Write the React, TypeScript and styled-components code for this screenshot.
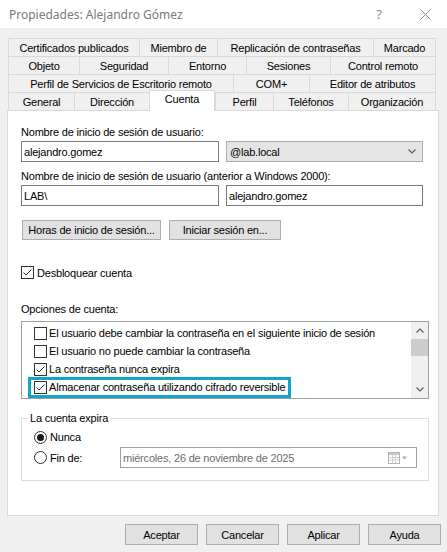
import React from "react";
import styled, { createGlobalStyle, css } from "styled-components";

const Global = createGlobalStyle`
  html, body { margin: 0; padding: 0; background: #f0f0f0; }
  body {
    font-family: "Liberation Sans", Arial, sans-serif;
    font-size: 11px;
    letter-spacing: -0.2px;
    color: #000;
  }
  * { box-sizing: border-box; }
`;

const Window = styled.div`
  width: 447px;
  height: 552px;
  display: flex;
  flex-direction: column;
  background: #f0f0f0;
  overflow: hidden;
`;

const TitleBar = styled.div`
  height: 28px;
  flex: none;
  display: flex;
  align-items: center;
  background: #fff;
  padding-left: 9px;
  font-family: "Noto Sans", "Open Sans", sans-serif;
  font-size: 12px;
  letter-spacing: 0;
  color: #7a7a7a;
`;

const TitleText = styled.div`
  flex: 1;
`;

const TitleButton = styled.div<{ $w: number }>`
  width: ${(p) => p.$w}px;
  height: 28px;
  display: flex;
  align-items: center;
  justify-content: center;
  color: #8a8a8a;
  font-size: 13px;
`;

const Body = styled.div`
  flex: 1;
  display: flex;
  flex-direction: column;
  padding: 10px 0 0 7px;
`;

const TabStrip = styled.div`
  margin-left: 1px;
  width: 428px;
  display: flex;
  flex-direction: column;
`;

const TabRow = styled.div`
  height: 18px;
  display: flex;
  align-items: flex-end;
`;

const Tab = styled.div<{ $w: number; $last?: boolean; $selected?: boolean }>`
  width: ${(p) => p.$w}px;
  height: 18px;
  flex: none;
  display: flex;
  align-items: center;
  justify-content: center;
  white-space: nowrap;
  background: #f0f0f0;
  border-top: 1px solid #d9d9d9;
  border-left: 1px solid #d9d9d9;
  ${(p) => p.$last && css`border-right: 1px solid #d9d9d9;`}
  ${(p) =>
    p.$selected &&
    css`
      position: relative;
      z-index: 1;
      height: 21px;
      margin-top: -2px;
      margin-bottom: -1px;
      padding-bottom: 4px;
      background: #fff;
      border-right: 1px solid #d9d9d9;
    `}
`;

const Page = styled.div`
  width: 432px;
  height: 406px;
  background: #fff;
  border: 1px solid #d9d9d9;
  padding: 15px 9px 0 13px;
  display: flex;
  flex-direction: column;
`;

const Label = styled.div<{ $mt?: number }>`
  line-height: 13px;
  height: 13px;
  margin-top: ${(p) => p.$mt ?? 0}px;
  white-space: nowrap;
`;

const FieldRow = styled.div<{ $mt?: number }>`
  display: flex;
  gap: 7px;
  margin-top: ${(p) => p.$mt ?? 0}px;
`;

const TextBox = styled.div<{ $w: number }>`
  width: ${(p) => p.$w}px;
  height: 21px;
  border: 1px solid #7a7a7a;
  background: #fff;
  display: flex;
  align-items: center;
  padding-left: 2px;
  white-space: nowrap;
`;

const Select = styled.div<{ $w: number }>`
  width: ${(p) => p.$w}px;
  height: 21px;
  border: 1px solid #adadad;
  background: #e5e5e5;
  display: flex;
  align-items: center;
  justify-content: space-between;
  padding: 0 6px 0 3px;
`;

const ButtonRow = styled.div<{ $mt?: number }>`
  display: flex;
  gap: 8px;
  margin-top: ${(p) => p.$mt ?? 0}px;
  padding-left: 1px;
`;

const Button = styled.div<{ $w: number; $h?: number }>`
  width: ${(p) => p.$w}px;
  height: ${(p) => p.$h ?? 20}px;
  border: 1px solid #adadad;
  background: #e1e1e1;
  display: flex;
  align-items: center;
  justify-content: center;
  white-space: nowrap;
`;

const CheckRow = styled.div<{ $mt?: number }>`
  display: flex;
  align-items: center;
  gap: 3px;
  height: 13px;
  margin-top: ${(p) => p.$mt ?? 0}px;
`;

const Box = styled.span`
  width: 13px;
  height: 13px;
  flex: none;
  border: 1px solid #333;
  background: #fff;
  display: flex;
  align-items: center;
  justify-content: center;
`;

const ListBox = styled.div`
  margin-top: 5px;
  height: 78px;
  border: 1px solid #a0a0a0;
  display: flex;
`;

const ListItems = styled.div`
  flex: 1;
  padding: 2px 0 0 12px;
  display: flex;
  flex-direction: column;
`;

const ListItem = styled.div`
  height: 18px;
  display: flex;
  align-items: center;
`;

const ItemContent = styled.div<{ $highlight?: boolean }>`
  position: relative;
  display: flex;
  align-items: center;
  gap: 2px;
  white-space: nowrap;
  ${(p) =>
    p.$highlight &&
    css`
      &::after {
        content: "";
        position: absolute;
        left: -6px;
        right: -6px;
        top: -4px;
        bottom: -4px;
        border: 3px solid #12a3c9;
        pointer-events: none;
      }
    `}
`;

const ScrollBar = styled.div`
  width: 17px;
  flex: none;
  background: #f0f0f0;
  display: flex;
  flex-direction: column;
`;

const ScrollArrow = styled.div`
  height: 17px;
  display: flex;
  align-items: center;
  justify-content: center;
`;

const ScrollThumb = styled.div`
  height: 17px;
  background: #cdcdcd;
`;

const ScrollTrack = styled.div`
  flex: 1;
`;

const GroupBox = styled.fieldset`
  margin: 13px 0 0 0;
  padding: 3px 11px 11px 12px;
  border: 1px solid #dcdcdc;
  min-width: 0;
`;

const Legend = styled.legend`
  padding: 0 2px;
  margin-left: -6px;
  line-height: 13px;
`;

const RadioRow = styled.div<{ $h: number }>`
  height: ${(p) => p.$h}px;
  display: flex;
  align-items: center;
`;

const RadioItem = styled.div<{ $w?: number }>`
  display: flex;
  align-items: center;
  gap: 3px;
  ${(p) => p.$w && css`width: ${p.$w}px;`}
`;

const RadioCircle = styled.span`
  width: 13px;
  height: 13px;
  flex: none;
  border-radius: 50%;
  border: 1px solid #333;
  background: #fff;
  display: flex;
  align-items: center;
  justify-content: center;
`;

const RadioDot = styled.span`
  width: 7px;
  height: 7px;
  border-radius: 50%;
  background: #1a1a1a;
`;

const DatePicker = styled.div`
  width: 297px;
  height: 21px;
  border: 1px solid #a0a0a0;
  background: #fff;
  color: #6d6d6d;
  display: flex;
  align-items: center;
  justify-content: space-between;
  padding: 0 8px 0 2px;
  white-space: nowrap;
`;

const Footer = styled.div`
  display: flex;
  justify-content: flex-end;
  gap: 8px;
  margin-top: 8px;
  padding-right: 6px;
`;

const Check = () => (
  <svg width="11" height="11" viewBox="0 0 11 11">
    <path d="M1.5 5.5 L4 8 L9.5 2.5" fill="none" stroke="#333" strokeWidth="1" />
  </svg>
);

const CheckBox = ({ checked }: { checked?: boolean }) => <Box>{checked && <Check />}</Box>;

const Chevron = ({ up }: { up?: boolean }) => (
  <svg width="8" height="5" viewBox="0 0 8 5">
    <path
      d={up ? "M0.5 4.5 L4 1 L7.5 4.5" : "M0.5 0.5 L4 4 L7.5 0.5"}
      fill="none"
      stroke="#606060"
      strokeWidth="1.2"
    />
  </svg>
);

const CalendarIcon = () => (
  <svg width="20" height="12" viewBox="0 0 20 12">
    <rect x="0.5" y="0.5" width="11" height="11" fill="#fff" stroke="#b5b5b5" />
    <rect x="1" y="1" width="10" height="2" fill="#c8c8c8" />
    <path d="M1 5.5 H11 M1 8 H11 M4.5 3 V11 M7.5 3 V11" stroke="#cfcfcf" strokeWidth="1" />
    <path d="M14 4.5 L19 4.5 L16.5 7.5 Z" fill="#b0b0b0" />
  </svg>
);

const CloseIcon = () => (
  <svg width="11" height="11" viewBox="0 0 11 11">
    <path d="M0.5 0.5 L10.5 10.5 M10.5 0.5 L0.5 10.5" stroke="#8a8a8a" strokeWidth="1" />
  </svg>
);

type TabDef = { label: string; w: number; selected?: boolean };

const tabRows: TabDef[][] = [
  [
    { label: "Certificados publicados", w: 131 },
    { label: "Miembro de", w: 78 },
    { label: "Replicación de contraseñas", w: 156 },
    { label: "Marcado", w: 63 },
  ],
  [
    { label: "Objeto", w: 71 },
    { label: "Seguridad", w: 89 },
    { label: "Entorno", w: 78 },
    { label: "Sesiones", w: 84 },
    { label: "Control remoto", w: 106 },
  ],
  [
    { label: "Perfil de Servicios de Escritorio remoto", w: 225 },
    { label: "COM+", w: 76 },
    { label: "Editor de atributos", w: 127 },
  ],
  [
    { label: "General", w: 66 },
    { label: "Dirección", w: 75 },
    { label: "Cuenta", w: 66, selected: true },
    { label: "Perfil", w: 58 },
    { label: "Teléfonos", w: 75 },
    { label: "Organización", w: 88 },
  ],
];

const options = [
  { label: "El usuario debe cambiar la contraseña en el siguiente inicio de sesión", checked: false },
  { label: "El usuario no puede cambiar la contraseña", checked: false },
  { label: "La contraseña nunca expira", checked: true },
  { label: "Almacenar contraseña utilizando cifrado reversible", checked: true, highlight: true },
];

export default function App() {
  return (
    <>
      <Global />
      <Window>
        <TitleBar>
          <TitleText>Propiedades: Alejandro Gómez</TitleText>
          <TitleButton $w={48}>?</TitleButton>
          <TitleButton $w={44}>
            <CloseIcon />
          </TitleButton>
        </TitleBar>
        <Body>
          <TabStrip>
            {tabRows.map((row, ri) => (
              <TabRow key={ri}>
                {row.map((t, ti) => (
                  <Tab key={t.label} $w={t.w} $last={ti === row.length - 1} $selected={t.selected}>
                    {t.label}
                  </Tab>
                ))}
              </TabRow>
            ))}
          </TabStrip>
          <Page>
            <Label>Nombre de inicio de sesión de usuario:</Label>
            <FieldRow $mt={2}>
              <TextBox $w={198}>alejandro.gomez</TextBox>
              <Select $w={197}>
                <span>@lab.local</span>
                <Chevron />
              </Select>
            </FieldRow>
            <Label $mt={8}>Nombre de inicio de sesión de usuario (anterior a Windows 2000):</Label>
            <FieldRow $mt={2}>
              <TextBox $w={198}>LAB\</TextBox>
              <TextBox $w={197}>alejandro.gomez</TextBox>
            </FieldRow>
            <ButtonRow $mt={14}>
              <Button $w={139}>Horas de inicio de sesión...</Button>
              <Button $w={112}>Iniciar sesión en...</Button>
            </ButtonRow>
            <CheckRow $mt={26}>
              <CheckBox checked />
              <span>Desbloquear cuenta</span>
            </CheckRow>
            <Label $mt={24}>Opciones de cuenta:</Label>
            <ListBox>
              <ListItems>
                {options.map((o) => (
                  <ListItem key={o.label}>
                    <ItemContent $highlight={o.highlight}>
                      <CheckBox checked={o.checked} />
                      <span>{o.label}</span>
                    </ItemContent>
                  </ListItem>
                ))}
              </ListItems>
              <ScrollBar>
                <ScrollArrow>
                  <Chevron up />
                </ScrollArrow>
                <ScrollThumb />
                <ScrollTrack />
                <ScrollArrow>
                  <Chevron />
                </ScrollArrow>
              </ScrollBar>
            </ListBox>
            <GroupBox>
              <Legend>La cuenta expira</Legend>
              <RadioRow $h={18}>
                <RadioItem>
                  <RadioCircle>
                    <RadioDot />
                  </RadioCircle>
                  <span>Nunca</span>
                </RadioItem>
              </RadioRow>
              <RadioRow $h={23}>
                <RadioItem $w={86}>
                  <RadioCircle />
                  <span>Fin de:</span>
                </RadioItem>
                <DatePicker>
                  <span>miércoles, 26 de noviembre de 2025</span>
                  <CalendarIcon />
                </DatePicker>
              </RadioRow>
            </GroupBox>
          </Page>
          <Footer>
            <Button $w={73} $h={21}>Aceptar</Button>
            <Button $w={73} $h={21}>Cancelar</Button>
            <Button $w={73} $h={21}>Aplicar</Button>
            <Button $w={73} $h={21}>Ayuda</Button>
          </Footer>
        </Body>
      </Window>
    </>
  );
}
